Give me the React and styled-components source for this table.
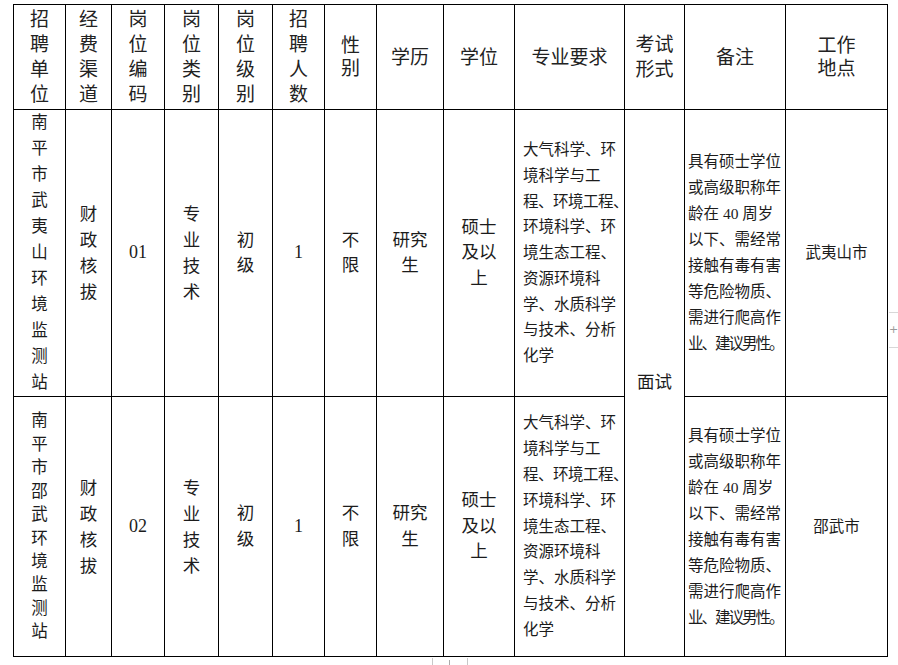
import React from "react";
import styled, { createGlobalStyle } from "styled-components";

const Global = createGlobalStyle`
  html, body { margin: 0; padding: 0; background: #fff; }
  body {
    font-family: "Liberation Serif", "Noto Sans CJK SC", serif;
    color: #1c1c1c;
    width: 898px;
    height: 665px;
    overflow: hidden;
  }
`;

const Page = styled.div`
  position: relative;
  width: 898px;
  height: 665px;
  padding: 4px 0 0 13px;
  box-sizing: border-box;
`;

const Table = styled.div`
  display: grid;
  grid-template-columns: 51px 45px 52px 53px 53px 51px 51px 66px 70px 109px 59px 100px 101px;
  grid-template-rows: 104px 286px 259px;
  gap: 1px;
  width: max-content;
  background: #000;
  border: 1px solid #000;
`;

const Cell = styled.div`
  background: #fff;
  display: flex;
  flex-direction: column;
  justify-content: center;
  align-items: ${(p) => (p.$left ? "flex-start" : "center")};
  padding: ${(p) => p.$pad || "0"};
  box-sizing: border-box;
  font-size: ${(p) => p.$size || 17.5}px;
  line-height: ${(p) => p.$lh || 25.5}px;
  white-space: nowrap;
  text-align: ${(p) => (p.$left ? "left" : "center")};
  ${(p) => (p.$span ? "grid-row: 2 / span 2; grid-column: 11;" : "")}
`;

const Head = styled(Cell)`
  font-size: 19px;
  color: #222;
  letter-spacing: ${(p) => p.$ls || 0}px;
`;

const Line = styled.span`
  display: block;
  letter-spacing: ${(p) => p.$tight || 0}px;
`;

const Num = styled.span`
  font-family: "Liberation Serif", serif;
  font-size: 18px;
`;

const Handle = styled.div`
  position: absolute;
  left: 889px;
  top: 312px;
  width: 9px;
  height: 34px;
  border-top: 1px solid #d8d8d8;
  border-bottom: 1px solid #d8d8d8;
  color: #9a9a9a;
  font-family: "DejaVu Sans", sans-serif;
  font-size: 11px;
  line-height: 34px;
  text-align: left;
  overflow: hidden;
`;

const BottomTab = styled.div`
  position: absolute;
  left: 432px;
  top: 658px;
  width: 34px;
  height: 7px;
  border-left: 1px solid #c8c8c8;
  border-right: 1px solid #c8c8c8;
  &::after {
    content: "";
    position: absolute;
    left: 16px;
    top: 2px;
    width: 1px;
    height: 5px;
    background: #aaa;
  }
`;

const Lines = ({ items }) =>
  items.map((t, i) =>
    typeof t === "string" ? (
      <Line key={i}>{t}</Line>
    ) : (
      <Line key={i} $tight={t.tight}>
        {t.text}
      </Line>
    )
  );

const headers = [
  { l: ["招", "聘", "单", "位"] },
  { l: ["经", "费", "渠", "道"] },
  { l: ["岗", "位", "编", "码"] },
  { l: ["岗", "位", "类", "别"] },
  { l: ["岗", "位", "级", "别"] },
  { l: ["招", "聘", "人", "数"] },
  { l: ["性", "别"], lh: 23 },
  { l: ["学历"], ls: 2 },
  { l: ["学位"] },
  { l: ["专业要求"] },
  { l: ["考试", "形式"], lh: 25 },
  { l: ["备注"] },
  { l: ["工作", "地点"], lh: 23 },
];

const major = [
  "大气科学、环",
  "境科学与工",
  { text: "程、环境工程、", tight: -0.5 },
  "环境科学、环",
  "境生态工程、",
  "资源环境科",
  "学、水质科学",
  "与技术、分析",
  "化学",
];

const note = [
  "具有硕士学位",
  "或高级职称年",
  "龄在 40 周岁",
  "以下、需经常",
  "接触有毒有害",
  "等危险物质、",
  "需进行爬高作",
  { text: "业、建议男性。", tight: -2 },
];

const rows = [
  { unit: "南平市武夷山环境监测站", code: "01", place: "武夷山市", unitLh: 26 },
  { unit: "南平市邵武环境监测站", code: "02", place: "邵武市", unitLh: 23.4 },
];

export default function App() {
  return (
    <>
      <Global />
      <Page>
        <Table>
          {headers.map((h, i) => (
            <Head key={i} $lh={h.lh || 25} $ls={h.ls}>
              <Lines items={h.l} />
            </Head>
          ))}
          {rows.map((r, ri) => (
            <React.Fragment key={ri}>
              <Cell $size={16.5} $lh={r.unitLh}>
                <Lines items={r.unit.split("")} />
              </Cell>
              <Cell $lh={26}>
                <Lines items={["财", "政", "核", "拔"]} />
              </Cell>
              <Cell>
                <Num>{r.code}</Num>
              </Cell>
              <Cell $lh={26}>
                <Lines items={["专", "业", "技", "术"]} />
              </Cell>
              <Cell>
                <Lines items={["初", "级"]} />
              </Cell>
              <Cell>
                <Num>1</Num>
              </Cell>
              <Cell>
                <Lines items={["不", "限"]} />
              </Cell>
              <Cell>
                <Lines items={["研究", "生"]} />
              </Cell>
              <Cell>
                <Lines items={["硕士", "及以", "上"]} />
              </Cell>
              <Cell $left $size={15.5} $lh={25.8} $pad="0 0 0 8px">
                <Lines items={major} />
              </Cell>
              {ri === 0 && (
                <Cell $span>
                  <Line>面试</Line>
                </Cell>
              )}
              <Cell $left $size={15.5} $lh={26} $pad="0 0 0 3px">
                <Lines items={note} />
              </Cell>
              <Cell $size={15.5}>
                <Line>{r.place}</Line>
              </Cell>
            </React.Fragment>
          ))}
        </Table>
        <Handle>+</Handle>
        <BottomTab />
      </Page>
    </>
  );
}
